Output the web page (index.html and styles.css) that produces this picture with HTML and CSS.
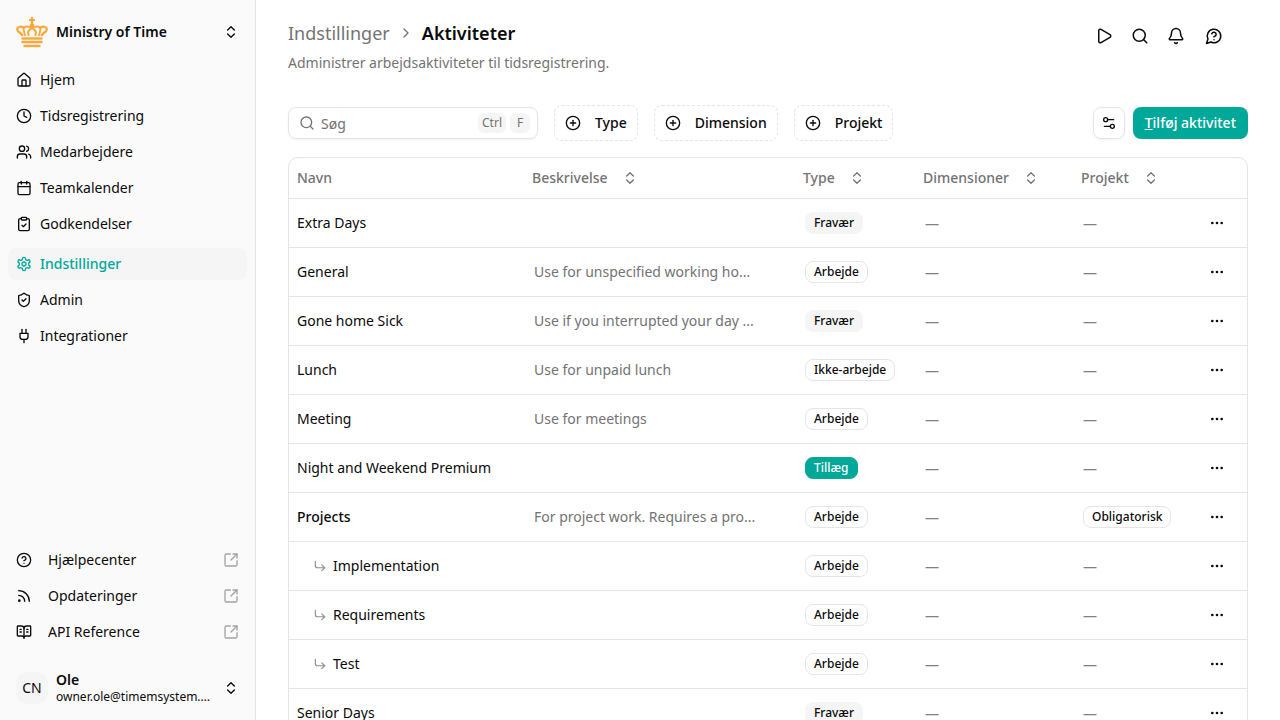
FILE: index.html
```html
<!DOCTYPE html>
<html lang="da">
<head>
<meta charset="utf-8">
<title>Aktiviteter</title>
<link rel="stylesheet" href="styles.css">
</head>
<body>
<svg class="defs" width="0" height="0" aria-hidden="true">
  <defs>
    <symbol id="updown" viewBox="0 0 24 24"><path d="m7 15 5 5 5-5"/><path d="m7 9 5-5 5 5"/></symbol>
    <symbol id="circleplus" viewBox="0 0 24 24"><circle cx="12" cy="12" r="10"/><path d="M8 12h8"/><path d="M12 8v8"/></symbol>
    <symbol id="ext" viewBox="0 0 24 24"><path d="M21 13v6a2 2 0 0 1-2 2H5a2 2 0 0 1-2-2V5a2 2 0 0 1 2-2h6"/><path d="m21 3-9 9"/><path d="M15 3h6v6"/></symbol>
    <symbol id="corner" viewBox="0 0 24 24"><path d="m15 10 5 5-5 5"/><path d="M4 4v7a4 4 0 0 0 4 4h12"/></symbol>
    <symbol id="dots" viewBox="0 0 24 24"><circle cx="5" cy="12" r="2"/><circle cx="12" cy="12" r="2"/><circle cx="19" cy="12" r="2"/></symbol>
  </defs>
</svg>
<div class="app">
  <aside class="sidebar">
    <div class="brand">
      <svg class="crown" viewBox="0 0 32 32" fill="none" stroke="#fba73a" stroke-width="2.200">
        <path d="M16 1v8M13 4h6"/>
        <circle cx="16" cy="10" r="2.400" fill="#fba73a" stroke="none"/>
        <path d="M6.500 20C6 16.500 1.200 16.500 1.200 13.500c0-3 4.800-3.800 6.300-1.500C9 10 13 10 16 12c3-2 7-2 8.500 0 1.500-2.300 6.300-1.500 6.300 1.500 0 3-4.800 3-5.300 6.500"/>
        <path d="M12.800 20c-1.500-4-.8-6 3.200-8 4 2 4.700 4 3.200 8"/>
        <path d="M7.500 12c0 3 1 5 1.800 8M24.500 12c0 3-1 5-1.800 8" stroke-width="1.800"/>
        <path d="M5.500 22.500h21" stroke-width="2.400"/>
        <path d="M5.500 26h21" stroke-width="2.400"/>
        <path d="M7.500 30h17" stroke-width="2.400"/>
      </svg>
      <span class="brand-name">Ministry of Time</span>
      <svg class="ico updown-dark"><use href="#updown"/></svg>
    </div>
    <nav class="nav">
      <a class="nav-item"><svg class="ico" viewBox="0 0 24 24"><path d="M15 21v-8a1 1 0 0 0-1-1h-4a1 1 0 0 0-1 1v8"/><path d="M3 10a2 2 0 0 1 .709-1.528l7-5.999a2 2 0 0 1 2.582 0l7 5.999A2 2 0 0 1 21 10v9a2 2 0 0 1-2 2H5a2 2 0 0 1-2-2z"/></svg>Hjem</a>
      <a class="nav-item"><svg class="ico" viewBox="0 0 24 24"><circle cx="12" cy="12" r="10"/><path d="M12 6v6l4 2"/></svg>Tidsregistrering</a>
      <a class="nav-item"><svg class="ico" viewBox="0 0 24 24"><path d="M16 21v-2a4 4 0 0 0-4-4H6a4 4 0 0 0-4 4v2"/><circle cx="9" cy="7" r="4"/><path d="M22 21v-2a4 4 0 0 0-3-3.870"/><path d="M16 3.130a4 4 0 0 1 0 7.750"/></svg>Medarbejdere</a>
      <a class="nav-item"><svg class="ico" viewBox="0 0 24 24"><path d="M8 2v4"/><path d="M16 2v4"/><rect x="3" y="4" width="18" height="18" rx="2"/><path d="M3 10h18"/></svg>Teamkalender</a>
      <a class="nav-item"><svg class="ico" viewBox="0 0 24 24"><rect x="8" y="2" width="8" height="4" rx="1"/><path d="M16 4h2a2 2 0 0 1 2 2v14a2 2 0 0 1-2 2H6a2 2 0 0 1-2-2V6a2 2 0 0 1 2-2h2"/><path d="m9 14 2 2 4-4"/></svg>Godkendelser</a>
      <a class="nav-item active"><svg class="ico" viewBox="0 0 24 24"><path d="M12.220 2h-.44a2 2 0 0 0-2 2v.18a2 2 0 0 1-1 1.730l-.43.25a2 2 0 0 1-2 0l-.15-.08a2 2 0 0 0-2.730.73l-.22.38a2 2 0 0 0 .73 2.730l.15.1a2 2 0 0 1 1 1.720v.51a2 2 0 0 1-1 1.740l-.15.09a2 2 0 0 0-.73 2.730l.22.38a2 2 0 0 0 2.730.73l.15-.08a2 2 0 0 1 2 0l.43.25a2 2 0 0 1 1 1.730V20a2 2 0 0 0 2 2h.44a2 2 0 0 0 2-2v-.18a2 2 0 0 1 1-1.730l.43-.25a2 2 0 0 1 2 0l.15.08a2 2 0 0 0 2.730-.73l.22-.39a2 2 0 0 0-.73-2.730l-.15-.08a2 2 0 0 1-1-1.740v-.5a2 2 0 0 1 1-1.740l.15-.09a2 2 0 0 0 .73-2.730l-.22-.38a2 2 0 0 0-2.730-.73l-.15.08a2 2 0 0 1-2 0l-.43-.25a2 2 0 0 1-1-1.730V4a2 2 0 0 0-2-2z"/><circle cx="12" cy="12" r="3"/></svg>Indstillinger</a>
      <a class="nav-item"><svg class="ico" viewBox="0 0 24 24"><path d="M20 13c0 5-3.500 7.500-7.660 8.950a1 1 0 0 1-.67-.01C7.500 20.500 4 18 4 13V6a1 1 0 0 1 1-1c2 0 4.500-1.200 6.240-2.720a1.170 1.170 0 0 1 1.520 0C14.510 3.810 17 5 19 5a1 1 0 0 1 1 1z"/><path d="m9 12 2 2 4-4"/></svg>Admin</a>
      <a class="nav-item"><svg class="ico" viewBox="0 0 24 24"><path d="M12 22v-5"/><path d="M9 8V2"/><path d="M15 8V2"/><path d="M18 8v5a4 4 0 0 1-4 4h-4a4 4 0 0 1-4-4V8Z"/></svg>Integrationer</a>
    </nav>
    <div class="links">
      <a class="link-item"><svg class="ico" viewBox="0 0 24 24"><circle cx="12" cy="12" r="10"/><path d="M9.090 9a3 3 0 0 1 5.830 1c0 2-3 3-3 3"/><path d="M12 17h.01"/></svg><span class="link-label">Hjælpecenter</span><svg class="ico ext"><use href="#ext"/></svg></a>
      <a class="link-item"><svg class="ico" viewBox="0 0 24 24"><path d="M4 11a9 9 0 0 1 9 9"/><path d="M4 4a16 16 0 0 1 16 16"/><circle cx="5" cy="19" r="1"/></svg><span class="link-label">Opdateringer</span><svg class="ico ext"><use href="#ext"/></svg></a>
      <a class="link-item"><svg class="ico" viewBox="0 0 24 24"><path d="M12 7v14"/><path d="M16 12h2"/><path d="M16 8h2"/><path d="M3 18a1 1 0 0 1-1-1V4a1 1 0 0 1 1-1h5a4 4 0 0 1 4 4 4 4 0 0 1 4-4h5a1 1 0 0 1 1 1v13a1 1 0 0 1-1 1h-6a3 3 0 0 0-3 3 3 3 0 0 0-3-3z"/><path d="M6 12h2"/><path d="M6 8h2"/></svg><span class="link-label">API Reference</span><svg class="ico ext"><use href="#ext"/></svg></a>
    </div>
    <div class="user">
      <span class="avatar">CN</span>
      <span class="user-text"><b>Ole</b><small>owner.ole@timemsystem.…</small></span>
      <svg class="ico updown-dark"><use href="#updown"/></svg>
    </div>
  </aside>
  <main class="main">
    <header class="top">
      <div class="top-left">
        <div class="crumbs"><span class="crumb">Indstillinger</span><svg class="ico crumb-sep" viewBox="0 0 24 24"><path d="m9 18 6-6-6-6"/></svg><h1>Aktiviteter</h1></div>
        <p class="sub">Administrer arbejdsaktiviteter til tidsregistrering.</p>
      </div>
      <div class="top-icons">
        <svg class="ico tool" viewBox="0 0 24 24"><path d="M5 5a2 2 0 0 1 3.008-1.728l11.997 6.998a2 2 0 0 1 .003 3.458l-12 7A2 2 0 0 1 5 19z"/></svg>
        <svg class="ico tool" viewBox="0 0 24 24"><path d="m21 21-4.340-4.340"/><circle cx="11" cy="11" r="8"/></svg>
        <svg class="ico tool" viewBox="0 0 24 24"><path d="M10.268 21a2 2 0 0 0 3.464 0"/><path d="M3.262 15.326A1 1 0 0 0 4 17h16a1 1 0 0 0 .74-1.673C19.410 13.956 18 12.499 18 8A6 6 0 0 0 6 8c0 4.499-1.411 5.956-2.738 7.326"/></svg>
        <svg class="ico tool tool-last" viewBox="0 0 24 24"><path d="M7.900 20A9 9 0 1 0 4 16.100L2 22Z"/><path d="M9.090 9a3 3 0 0 1 5.830 1c0 2-3 3-3 3"/><path d="M12 17h.01"/></svg>
      </div>
    </header>
    <div class="toolbar">
      <div class="search">
        <svg class="ico search-ico" viewBox="0 0 24 24"><path d="m21 21-4.340-4.340"/><circle cx="11" cy="11" r="8"/></svg>
        <span class="search-ph">Søg</span>
        <kbd class="kbd">Ctrl</kbd><kbd class="kbd">F</kbd>
      </div>
      <button class="filter"><svg class="ico"><use href="#circleplus"/></svg>Type</button>
      <button class="filter"><svg class="ico"><use href="#circleplus"/></svg>Dimension</button>
      <button class="filter"><svg class="ico"><use href="#circleplus"/></svg>Projekt</button>
      <button class="settings"><svg class="ico" viewBox="0 0 24 24"><path d="M14 17H5"/><path d="M19 7h-9"/><circle cx="17" cy="17" r="3"/><circle cx="7" cy="7" r="3"/></svg></button>
      <button class="primary"><u>T</u>ilføj aktivitet</button>
    </div>
    <div class="table-wrap">
      <table class="table">
        <colgroup><col class="c1"><col class="c2"><col class="c3"><col class="c4"><col class="c5"><col class="c6"></colgroup>
        <thead>
          <tr>
            <th>Navn</th>
            <th><span class="th-in">Beskrivelse<svg class="ico sort"><use href="#updown"/></svg></span></th>
            <th><span class="th-in">Type<svg class="ico sort"><use href="#updown"/></svg></span></th>
            <th><span class="th-in">Dimensioner<svg class="ico sort"><use href="#updown"/></svg></span></th>
            <th><span class="th-in">Projekt<svg class="ico sort"><use href="#updown"/></svg></span></th>
            <th></th>
          </tr>
        </thead>
        <tbody>
          <tr><td>Extra Days</td><td class="desc"></td><td class="pad"><span class="badge grey">Fravær</span></td><td class="pad dash">—</td><td class="pad dash">—</td><td class="act"><svg class="dots"><use href="#dots"/></svg></td></tr>
          <tr><td>General</td><td class="desc">Use for unspecified working ho...</td><td class="pad"><span class="badge">Arbejde</span></td><td class="pad dash">—</td><td class="pad dash">—</td><td class="act"><svg class="dots"><use href="#dots"/></svg></td></tr>
          <tr><td>Gone home Sick</td><td class="desc">Use if you interrupted your day ...</td><td class="pad"><span class="badge grey">Fravær</span></td><td class="pad dash">—</td><td class="pad dash">—</td><td class="act"><svg class="dots"><use href="#dots"/></svg></td></tr>
          <tr><td>Lunch</td><td class="desc">Use for unpaid lunch</td><td class="pad"><span class="badge">Ikke-arbejde</span></td><td class="pad dash">—</td><td class="pad dash">—</td><td class="act"><svg class="dots"><use href="#dots"/></svg></td></tr>
          <tr><td>Meeting</td><td class="desc">Use for meetings</td><td class="pad"><span class="badge">Arbejde</span></td><td class="pad dash">—</td><td class="pad dash">—</td><td class="act"><svg class="dots"><use href="#dots"/></svg></td></tr>
          <tr><td>Night and Weekend Premium</td><td class="desc"></td><td class="pad"><span class="badge teal">Tillæg</span></td><td class="pad dash">—</td><td class="pad dash">—</td><td class="act"><svg class="dots"><use href="#dots"/></svg></td></tr>
          <tr><td class="parent">Projects</td><td class="desc">For project work. Requires a pro...</td><td class="pad"><span class="badge">Arbejde</span></td><td class="pad dash">—</td><td class="pad"><span class="badge">Obligatorisk</span></td><td class="act"><svg class="dots"><use href="#dots"/></svg></td></tr>
          <tr><td><span class="child"><svg class="ico corner"><use href="#corner"/></svg>Implementation</span></td><td class="desc"></td><td class="pad"><span class="badge">Arbejde</span></td><td class="pad dash">—</td><td class="pad dash">—</td><td class="act"><svg class="dots"><use href="#dots"/></svg></td></tr>
          <tr><td><span class="child"><svg class="ico corner"><use href="#corner"/></svg>Requirements</span></td><td class="desc"></td><td class="pad"><span class="badge">Arbejde</span></td><td class="pad dash">—</td><td class="pad dash">—</td><td class="act"><svg class="dots"><use href="#dots"/></svg></td></tr>
          <tr><td><span class="child"><svg class="ico corner"><use href="#corner"/></svg>Test</span></td><td class="desc"></td><td class="pad"><span class="badge">Arbejde</span></td><td class="pad dash">—</td><td class="pad dash">—</td><td class="act"><svg class="dots"><use href="#dots"/></svg></td></tr>
          <tr><td>Senior Days</td><td class="desc"></td><td class="pad"><span class="badge grey">Fravær</span></td><td class="pad dash">—</td><td class="pad dash">—</td><td class="act"><svg class="dots"><use href="#dots"/></svg></td></tr>
        </tbody>
      </table>
    </div>
  </main>
</div>
</body>
</html>
```
FILE: styles.css
```css
* { box-sizing: border-box; }
html, body { margin: 0; height: 100%; overflow: hidden; }
body { font-family: "Noto Sans", sans-serif; font-size: 14px; line-height: 20px; color: #0a0a0a; background: #fff; }
.defs { position: absolute; }
.ico { width: 16px; height: 16px; flex: none; fill: none; stroke: currentColor; stroke-width: 2; stroke-linecap: round; stroke-linejoin: round; }
.app { display: flex; height: 720px; }

.sidebar { width: 256px; flex: none; height: 720px; background: #fafafa; border-right: 1px solid #e5e5e5; padding: 8px; display: flex; flex-direction: column; }
.brand { height: 48px; display: flex; align-items: center; gap: 8px; padding: 0 8px; }
.crown { width: 32px; height: 32px; flex: none; }
.brand-name { flex: 1; font-weight: 600; }
.updown-dark { color: #0a0a0a; }
.nav { display: flex; flex-direction: column; margin-top: 8px; }
.nav-item { height: 32px; margin-bottom: 4px; display: flex; align-items: center; gap: 8px; padding: 0 8px; border-radius: 8px; }
.nav-item:nth-child(5) { margin-bottom: 8px; }
.nav-item.active { color: #00a89a; background: #f5f5f5; font-weight: 500; }
.links { margin-top: auto; display: flex; flex-direction: column; gap: 4px; }
.link-item { height: 32px; display: flex; align-items: center; padding: 0 8px; }
.link-label { flex: 1; margin-left: 16px; }
.ext { color: #a3a3a3; }
.user { height: 48px; margin-top: 16px; display: flex; align-items: center; gap: 8px; padding: 0 8px; }
.avatar { width: 32px; height: 32px; border-radius: 10px; background: #f5f5f5; display: flex; align-items: center; justify-content: center; flex: none; }
.user-text { flex: 1; min-width: 0; display: flex; flex-direction: column; line-height: 16px; }
.user-text b { font-weight: 600; font-size: 14px; }
.user-text small { font-size: 12px; line-height: 17px; white-space: nowrap; }

.main { flex: 1; min-width: 0; padding: 0 32px; }
.top { display: flex; justify-content: space-between; height: 105px; padding-top: 17px; }
.crumbs { display: flex; align-items: center; height: 32px; }
.crumb { font-size: 18px; color: #737373; }
.crumb-sep { margin: 0 8px; color: #737373; }
h1 { margin: 0; font-size: 18px; font-weight: 600; }
.sub { margin: 4px 0 0; color: #737373; line-height: 20px; }
.top-icons { display: flex; gap: 18px; height: 38px; align-items: center; padding-right: 25px; }
.tool { width: 18px; height: 18px; }
.tool-last { margin-left: 2px; }
.toolbar { display: flex; align-items: center; height: 36px; }
.search { width: 250px; height: 32px; border: 1px solid #e5e5e5; border-radius: 8px; display: flex; align-items: center; padding: 0 7px 0 10px; box-shadow: 0 1px 2px rgba(0,0,0,.05); }
.search-ico { color: #737373; }
.search-ph { flex: 1; margin-left: 6px; padding-top: 2px; color: #737373; }
.kbd { font-family: inherit; font-size: 12px; color: #737373; background: #f5f5f5; border-radius: 6px; height: 20px; min-width: 20px; display: flex; align-items: center; justify-content: center; padding: 0 4px; margin-left: 4px; }
.filter { font: inherit; font-weight: 500; color: #0a0a0a; background: #fff; height: 36px; border: 1px dashed #e5e5e5; border-radius: 8px; display: flex; align-items: center; gap: 14px; padding: 0 10px; margin-left: 16px; }
.settings { margin-left: auto; width: 32px; height: 32px; background: #fff; border: 1px solid #e5e5e5; border-radius: 8px; display: flex; align-items: center; justify-content: center; padding: 0; color: #0a0a0a; box-shadow: 0 1px 2px rgba(0,0,0,.05); }
.primary { font: inherit; font-weight: 500; height: 32px; margin-left: 8px; padding: 0 12px; color: #fff; background: #00a89a; border: 0; border-radius: 8px; }
.table-wrap { margin-top: 16px; border: 1px solid #e5e5e5; border-radius: 10px; overflow: hidden; }
.table { width: 100%; table-layout: fixed; border-collapse: collapse; }
.c1 { width: 235px; } .c2 { width: 271px; } .c3 { width: 120px; } .c4 { width: 158px; } .c5 { width: 120px; }
th { height: 40px; text-align: left; font-weight: 500; color: #737373; padding: 0 8px; }
td { height: 49px; padding: 0 8px; border-top: 1px solid #e5e5e5; white-space: nowrap; }
.th-in { display: inline-flex; align-items: center; gap: 14px; }
.sort { color: #737373; }
.desc { color: #737373; padding-left: 10px; }
.pad { padding-left: 10px; }
.dash { color: #808080; padding-top: 2px; }
.parent { font-weight: 500; }
.child { display: flex; align-items: center; gap: 6px; padding-left: 16px; }
.corner { width: 14px; height: 14px; color: #8f8f8f; }
.act { padding: 0 6px 0 0; }
.dots { display: block; margin: 0 auto; width: 16px; height: 16px; fill: #0a0a0a; stroke: none; }
.badge { display: inline-flex; align-items: center; height: 22px; padding: 0 8px; border: 1px solid #e5e5e5; border-radius: 8px; font-size: 12px; font-weight: 500; }
.badge.grey { background: #f5f5f5; border-color: #f5f5f5; }
.badge.teal { background: #00a89a; border-color: #00a89a; color: #fff; padding-right: 9px; }
```
